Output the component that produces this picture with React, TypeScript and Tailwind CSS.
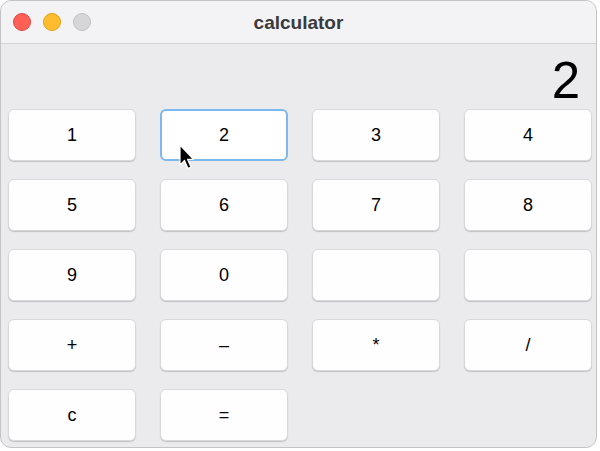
import React from 'react';

const KEYS = ['1', '2', '3', '4', '5', '6', '7', '8', '9', '0', '', '', '+', '–', '*', '/', 'c', '='];

const App: React.FC = () => {
  return (
    <div className="relative w-[600px] h-[451px] bg-white overflow-hidden" style={{ fontFamily: '"Liberation Sans", Arial, sans-serif' }}>
      <div className="w-[597px] h-[448px] rounded-[11px] border border-[#c4c3c6] bg-[#ebeaec] overflow-hidden flex flex-col">
        {/* title bar */}
        <div className="relative h-[43px] shrink-0 bg-[#f3f2f5] border-b border-[#d3d2d5] flex items-center justify-center">
          <div className="absolute left-[12px] top-[12px] flex gap-[12px]">
            <span className="w-[18px] h-[18px] rounded-full bg-[#fe5f57] border border-[#e2463f]" />
            <span className="w-[18px] h-[18px] rounded-full bg-[#febc2e] border border-[#e1a116]" />
            <span className="w-[18px] h-[18px] rounded-full bg-[#d6d5d8] border border-[#c3c2c5]" />
          </div>
          <span className="text-[19px] font-bold text-[#3a393c] mt-[2px]">calculator</span>
        </div>

        {/* display */}
        <div className="h-[65px] shrink-0 flex items-center justify-end pr-[16px]">
          <span className="text-[51px] leading-none text-black mt-[8px]">2</span>
        </div>

        {/* keys */}
        <div className="grid grid-cols-[repeat(4,128px)] auto-rows-[52px] gap-x-6 gap-y-[18px] pl-[7px]">
          {KEYS.map((k, i) => (
            <div
              key={i}
              className={
                i === 1
                  ? 'rounded-[6px] bg-white border-2 border-[#7cb7ed] flex items-center justify-center text-[18px] text-black'
                  : 'rounded-[6px] bg-[#fefdff] border border-[#d9d8db] shadow-[0_1px_1px_rgba(0,0,0,0.18)] flex items-center justify-center text-[18px] text-black'
              }
            >
              {k}
            </div>
          ))}
        </div>
      </div>

      {/* mouse cursor */}
      <svg className="absolute left-[179px] top-[144px]" width="16" height="30" viewBox="0 0 16 30">
        <path d="M1 1 L1 21 L5.5 16.5 L9 24.5 L12 23 L8.6 15.4 L14.5 15.4 Z" fill="#000" stroke="#fff" strokeWidth="1.2" strokeLinejoin="round" />
      </svg>
    </div>
  );
};

export default App;
